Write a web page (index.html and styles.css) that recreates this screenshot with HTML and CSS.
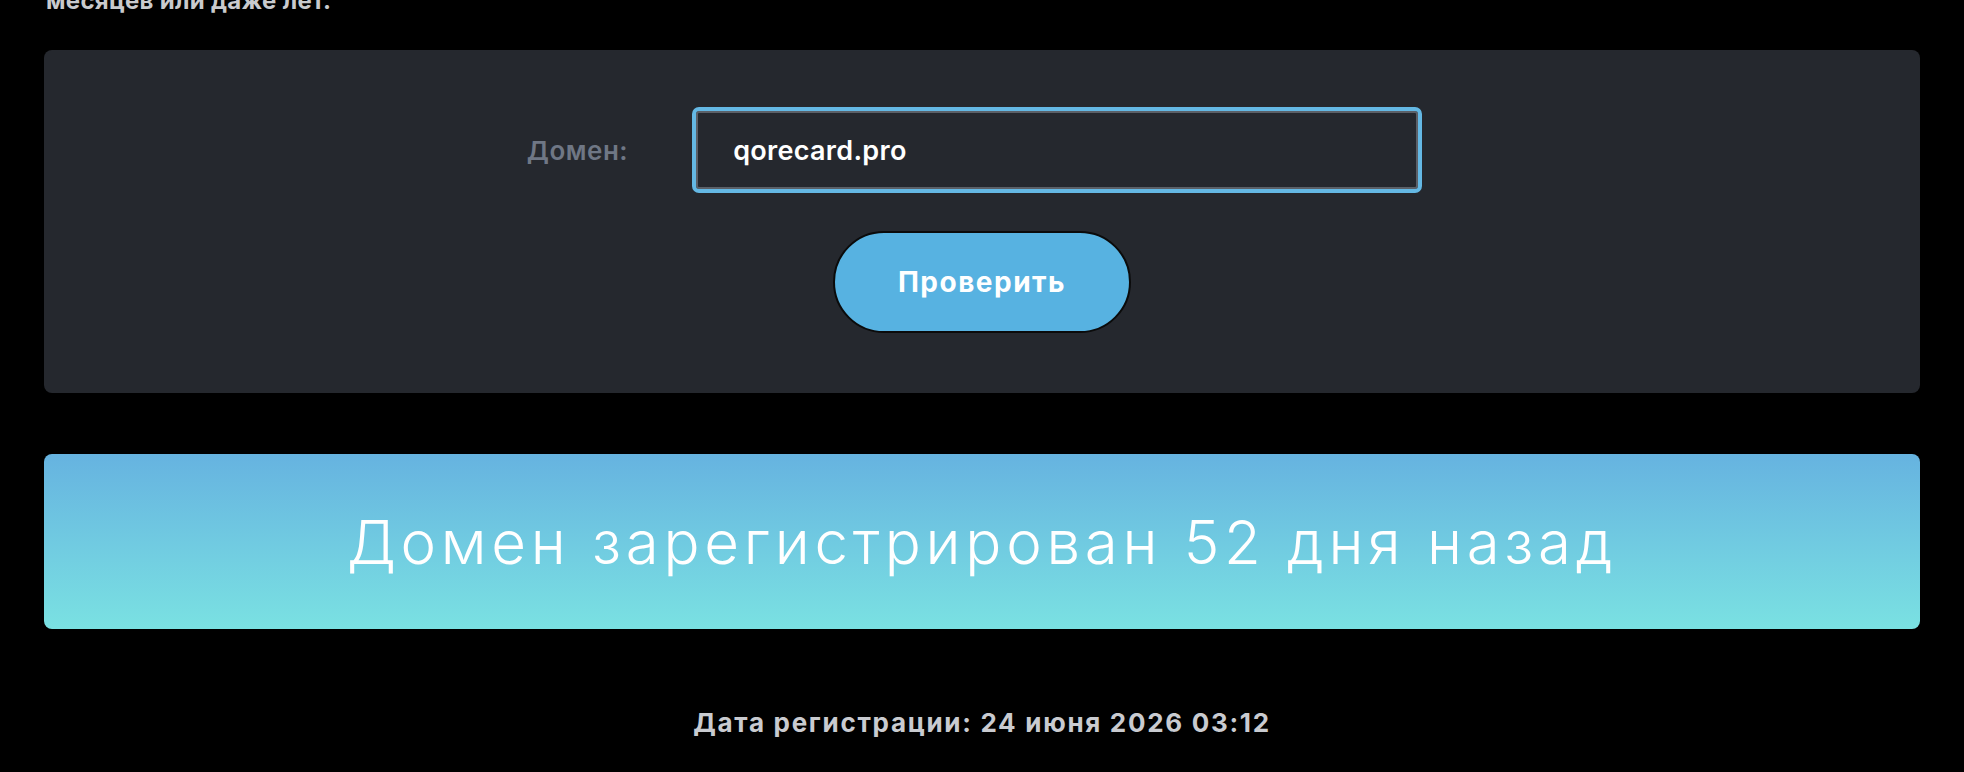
FILE: index.html
```html
<!DOCTYPE html>
<html lang="ru">
<head>
<meta charset="utf-8">
<title>Проверка возраста домена</title>
<link rel="stylesheet" href="styles.css">
</head>
<body>
<main class="page">
  <p class="intro">месяцев или даже лет.</p>
  <form class="card">
    <div class="field-row">
      <label class="field-label" for="domain">Домен:</label>
      <input class="field-input" id="domain" type="text" value="qorecard.pro">
    </div>
    <button class="check-btn" type="button">Проверить</button>
  </form>
  <div class="result-banner">Домен зарегистрирован 52 дня назад</div>
  <p class="reg-date">Дата регистрации: 24 июня 2026 03:12</p>
</main>
</body>
</html>
```

FILE: styles.css
```css
html, body {
  margin: 0;
  padding: 0;
  background: #000;
  height: 100%;
  overflow: hidden;
}

body {
  font-family: "Inter", "DejaVu Sans", sans-serif;
  color: #fff;
}

.page {
  max-width: 1876px;
  margin: 0 auto;
}

.intro {
  margin: -14px 0 0 2px;
  font-size: 24px;
  line-height: 30px;
  font-weight: 700;
  letter-spacing: 0.3px;
  color: #c9cacd;
}

.card {
  margin-top: 34px;
  background: #25282e;
  border-radius: 8px;
  padding: 61px 0 60px;
  display: flex;
  flex-direction: column;
  align-items: center;
  gap: 42px;
}

.field-row {
  display: flex;
  align-items: center;
  gap: 68px;
  padding-right: 19px;
}

.field-label {
  font-size: 26px;
  font-weight: 600;
  letter-spacing: 0.5px;
  color: #6f7785;
}

.field-input {
  box-sizing: border-box;
  width: 722px;
  height: 78px;
  padding: 0 0 0 35px;
  background: #25282e;
  border: 2px solid #5b6068;
  border-radius: 3px;
  outline: 4px solid #64b8e4;
  font-family: inherit;
  font-size: 27px;
  font-weight: 600;
  letter-spacing: 0.3px;
  color: #fff;
}

.check-btn {
  box-sizing: border-box;
  width: 298px;
  height: 102px;
  border: 2px solid #0b0b0b;
  border-radius: 51px;
  background: #57b2e1;
  font-family: inherit;
  font-size: 28px;
  font-weight: 700;
  letter-spacing: 1.5px;
  color: #fff;
}

.result-banner {
  margin-top: 61px;
  height: 175px;
  display: flex;
  align-items: center;
  justify-content: center;
  border-radius: 8px;
  background: linear-gradient(180deg, #66b3e0 0%, #7ae1e2 100%);
  font-size: 60px;
  line-height: 72px;
  font-weight: 300;
  letter-spacing: 4.7px;
  color: #fff;
}

.reg-date {
  margin: 76px 0 0;
  text-align: center;
  font-size: 26px;
  line-height: 36px;
  font-weight: 700;
  letter-spacing: 1.7px;
  color: #c9cbd0;
}
```
